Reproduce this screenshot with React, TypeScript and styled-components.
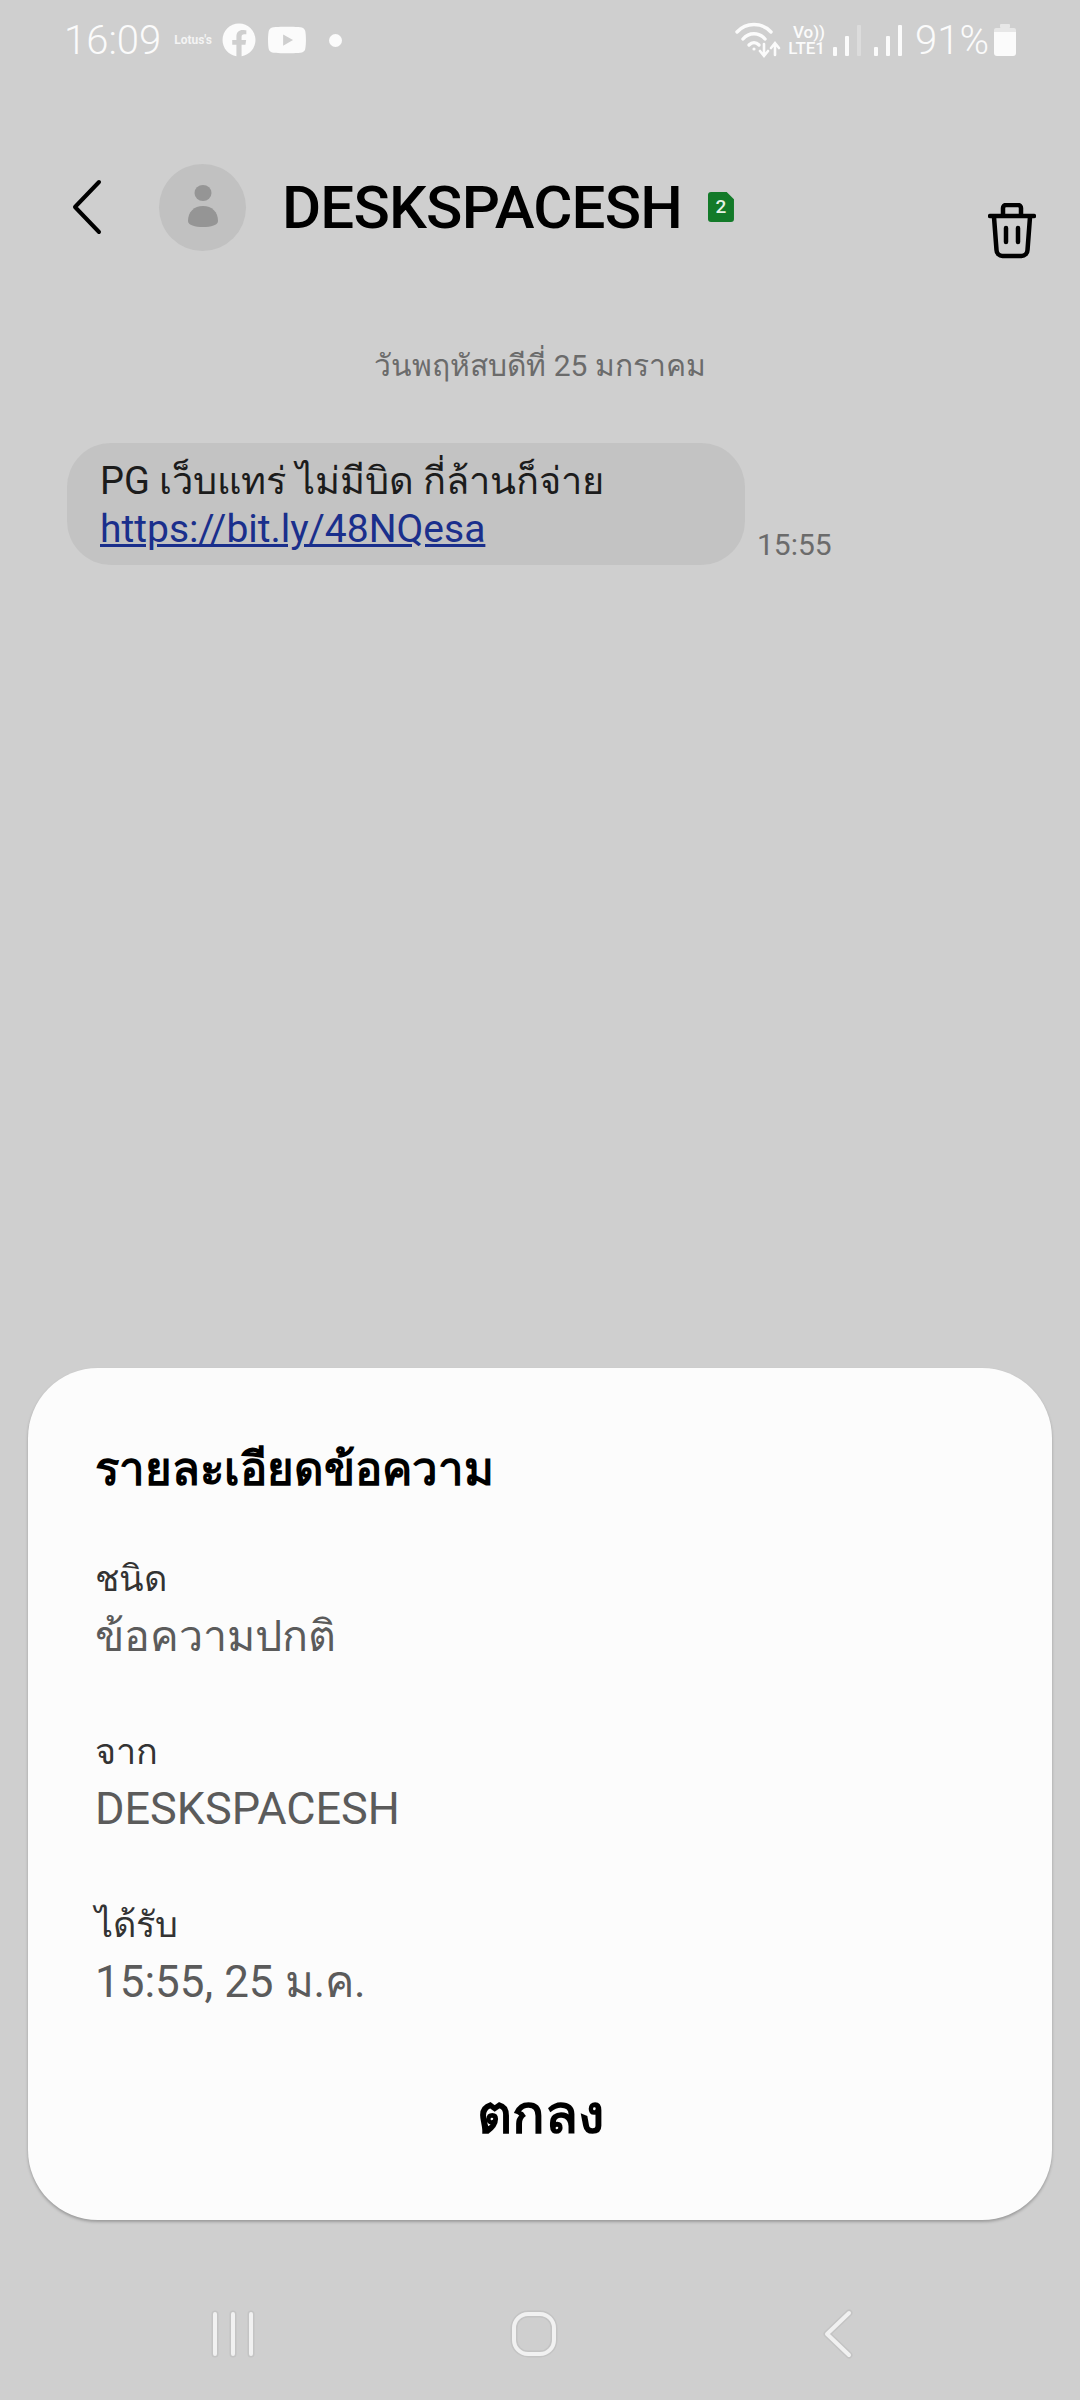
import React from "react";
import styled, { createGlobalStyle } from "styled-components";
import { FaFacebook, FaYoutube } from "react-icons/fa";

const GlobalStyle = createGlobalStyle`
  html, body {
    margin: 0;
    padding: 0;
    background: #cfcfcf;
  }
  * {
    box-sizing: border-box;
  }
`;

const DetailRows = [
  { label: "ชนิด", value: "ข้อความปกติ", size: 43 },
  { label: "จาก", value: "DESKSPACESH", size: 45 },
  { label: "ได้รับ", value: "15:55, 25 ม.ค.", size: 44 },
];

const App: React.FC = () => {
  return (
    <Screen>
      <GlobalStyle />
      <StatusBar>
        <StatusGroup>
          <Clock>16:09</Clock>
          <LotusLabel>Lotus's</LotusLabel>
          <FaFacebook size={34} color="#fbfbfb" />
          <FaYoutube size={40} color="#fbfbfb" />
          <Dot />
        </StatusGroup>
        <StatusGroup>
          <WifiIcon />
          <VoLte>
            <VoLteLine>Vo))</VoLteLine>
            <VoLteLine>LTE1</VoLteLine>
          </VoLte>
          <SignalPair>
            <SignalIcon dim />
            <SignalIcon />
          </SignalPair>
          <BatteryText>91%</BatteryText>
          <BatteryIcon />
        </StatusGroup>
      </StatusBar>

      <Header>
        <BackIcon />
        <Avatar>
          <PersonIcon />
        </Avatar>
        <Title>DESKSPACESH</Title>
        <SimBadge>2</SimBadge>
        <TrashIcon />
      </Header>

      <DateLine>วันพฤหัสบดีที่ 25 มกราคม</DateLine>

      <MessageRow>
        <Bubble>
          <div>PG เว็บแทร่ ไม่มีบิด กี่ล้านก็จ่าย</div>
          <MessageLink href="#">https://bit.ly/48NQesa</MessageLink>
        </Bubble>
        <MessageTime>15:55</MessageTime>
      </MessageRow>

      <Sheet>
        <SheetTitle>รายละเอียดข้อความ</SheetTitle>
        {DetailRows.map((row) => (
          <DetailRow key={row.label}>
            <DetailLabel>{row.label}</DetailLabel>
            <DetailValue $size={row.size}>{row.value}</DetailValue>
          </DetailRow>
        ))}
        <OkButton>ตกลง</OkButton>
      </Sheet>

      <NavBar>
        <RecentsIcon />
        <HomeIcon />
        <NavBackIcon />
      </NavBar>
    </Screen>
  );
};

export default App;

const WifiIcon = () => (
  <svg width="46" height="40" viewBox="0 0 46 40" fill="none" stroke="#fbfbfb" strokeWidth="3.4" strokeLinecap="round">
    <path d="M2 12 C11 2 27 2 36 12" />
    <path d="M8 19 C14 12 24 12 30 19" />
    <path d="M14 25 C17 22 21 22 24 25" />
    <circle cx="19" cy="29" r="1.6" fill="#fbfbfb" stroke="none" />
    <path d="M29 24 V35 M25 31 L29 36 L33 31" strokeWidth="2.6" />
    <path d="M40 35 V24 M36 28 L40 23 L44 28" strokeWidth="2.6" />
  </svg>
);

const SignalIcon = ({ dim }: { dim?: boolean }) => (
  <svg width="28" height="32" viewBox="0 0 28 32" fill="#fbfbfb">
    <rect x="0" y="23" width="4" height="9" rx="1" />
    <rect x="12" y="12" width="4" height="20" rx="1" />
    <rect x="24" y="1" width="4" height="31" rx="1" opacity={dim ? 0.3 : 1} />
  </svg>
);

const BatteryIcon = () => (
  <svg width="22" height="32" viewBox="0 0 22 32" fill="#fbfbfb">
    <rect x="6" y="0" width="10" height="4" rx="1" opacity="0.55" />
    <rect x="0" y="4" width="22" height="6" rx="2" opacity="0.55" />
    <path d="M0 8 H22 V29 a3 3 0 0 1 -3 3 H3 a3 3 0 0 1 -3 -3 Z" />
  </svg>
);

const BackIcon = () => (
  <BackSvg width="32" height="56" viewBox="0 0 32 56" fill="none" stroke="#000" strokeWidth="4" strokeLinecap="round" strokeLinejoin="round">
    <path d="M28 3 L4 28 L28 53" />
  </BackSvg>
);

const PersonIcon = () => (
  <svg width="32" height="44" viewBox="0 0 32 44" fill="#959595">
    <ellipse cx="16" cy="8" rx="8.5" ry="8" />
    <path d="M1 36 C1 27 7 21 16 21 C25 21 31 27 31 36 C31 40 24 42 16 42 C8 42 1 40 1 36 Z" />
  </svg>
);

const TrashIcon = () => (
  <TrashSvg width="48" height="56" viewBox="0 0 48 56" fill="none" stroke="#000" strokeWidth="4.5" strokeLinecap="round" strokeLinejoin="round">
    <path d="M2 13 H46" />
    <path d="M15 12 V5 a3 3 0 0 1 3 -3 H30 a3 3 0 0 1 3 3 V12" />
    <path d="M6 14 L8.5 47 a6 6 0 0 0 6 6 H33.5 a6 6 0 0 0 6 -6 L42 14" />
    <path d="M18 25 V39 M30 25 V39" />
  </TrashSvg>
);

const RecentsIcon = () => (
  <svg width="44" height="48" viewBox="0 0 44 48" fill="none" stroke="#f1f1f1" strokeWidth="4" strokeLinecap="round">
    <g stroke="#c4c4c4" strokeWidth="7">
      <path d="M4 4 V44 M22 4 V44 M40 4 V44" />
    </g>
    <path d="M4 4 V44 M22 4 V44 M40 4 V44" />
  </svg>
);

const HomeIcon = () => (
  <HomeSvg width="48" height="50" viewBox="0 0 48 50" fill="none">
    <rect x="4" y="5" width="40" height="40" rx="14" stroke="#c4c4c4" strokeWidth="7" />
    <rect x="4" y="5" width="40" height="40" rx="14" stroke="#f1f1f1" strokeWidth="4" />
  </HomeSvg>
);

const NavBackIcon = () => (
  <svg width="32" height="50" viewBox="0 0 32 50" fill="none" strokeLinecap="round" strokeLinejoin="round">
    <path d="M27 4 L5 25 L27 46" stroke="#c4c4c4" strokeWidth="7" />
    <path d="M27 4 L5 25 L27 46" stroke="#f1f1f1" strokeWidth="4" />
  </svg>
);

const Screen = styled.div`
  width: 1080px;
  height: 2400px;
  display: flex;
  flex-direction: column;
  background: #cfcfcf;
  font-family: Roboto, "Noto Sans", "DejaVu Sans", sans-serif;
  overflow: hidden;
`;

const StatusBar = styled.div`
  height: 80px;
  padding: 0 64px 0 64px;
  display: flex;
  align-items: center;
  justify-content: space-between;
`;

const StatusGroup = styled.div`
  display: flex;
  align-items: center;
  gap: 11px;
`;

const Clock = styled.span`
  font-size: 40px;
  font-weight: 300;
  color: #fbfbfb;
  margin-right: 2px;
`;

const LotusLabel = styled.span`
  font-size: 12px;
  font-weight: 700;
  color: #f4f4f4;
  margin-right: -1px;
`;

const Dot = styled.span`
  width: 13px;
  height: 13px;
  margin-left: 11px;
  border-radius: 50%;
  background: #fbfbfb;
`;

const VoLte = styled.div`
  display: flex;
  flex-direction: column;
  align-items: flex-end;
  font-size: 17px;
  font-weight: 500;
  color: #fbfbfb;
  margin-left: -4px;
`;

const VoLteLine = styled.span`
  display: block;
  height: 16px;
  line-height: 16px;
`;

const SignalPair = styled.div`
  display: flex;
  align-items: center;
  gap: 13px;
  margin-left: -3px;
`;

const BatteryText = styled.span`
  font-size: 40px;
  font-weight: 300;
  color: #fbfbfb;
  margin-left: 2px;
  margin-right: -6px;
`;

const Header = styled.div`
  height: 128px;
  margin-top: 63px;
  padding: 0 44px 0 71px;
  display: flex;
  align-items: center;
`;

const BackSvg = styled.svg`
  flex-shrink: 0;
`;

const Avatar = styled.div`
  width: 87px;
  height: 87px;
  margin-left: 56px;
  border-radius: 50%;
  background: #c1c1c1;
  display: flex;
  align-items: center;
  justify-content: center;
`;

const Title = styled.div`
  margin-left: 36px;
  font-size: 60px;
  font-weight: 500;
  letter-spacing: -0.8px;
  color: #000;
`;

const SimBadge = styled.div`
  width: 26px;
  height: 30px;
  margin-left: 26px;
  border-radius: 3px;
  clip-path: polygon(0 0, 72% 0, 100% 24%, 100% 100%, 0 100%);
  background: #137a29;
  color: #e6f2e6;
  font-size: 19px;
  font-weight: 500;
  line-height: 30px;
  text-align: center;
`;

const TrashSvg = styled.svg`
  margin-left: auto;
  margin-top: 48px;
`;

const DateLine = styled.div`
  margin-top: 75px;
  text-align: center;
  font-size: 30px;
  line-height: 40px;
  color: #6b6b6b;
`;

const MessageRow = styled.div`
  margin-top: 57px;
  padding-left: 67px;
  display: flex;
  align-items: flex-end;
  gap: 12px;
`;

const Bubble = styled.div`
  width: 678px;
  height: 122px;
  padding: 15px 33px;
  border-radius: 44px;
  background: #c3c3c3;
  font-size: 38px;
  line-height: 47px;
  color: #1c1c1c;
`;

const MessageLink = styled.a`
  display: block;
  margin-top: 1px;
  font-size: 39px;
  color: #1a2f8c;
  text-decoration: underline;
`;

const MessageTime = styled.span`
  font-size: 30px;
  line-height: 40px;
  color: #6b6b6b;
`;

const Sheet = styled.div`
  margin: auto 28px 0;
  height: 852px;
  padding: 72px 67px 0;
  border-radius: 70px;
  background: #fcfcfc;
  box-shadow: 0 2px 3px rgba(0, 0, 0, 0.25);
  display: flex;
  flex-direction: column;
`;

const SheetTitle = styled.div`
  font-size: 45.5px;
  line-height: 60px;
  font-weight: 700;
  color: #000;
  margin-bottom: 53px;
`;

const DetailRow = styled.div`
  display: flex;
  flex-direction: column;
  margin-bottom: 59px;
`;

const DetailLabel = styled.div`
  font-size: 36px;
  line-height: 52px;
  color: #333;
`;

const DetailValue = styled.div<{ $size: number }>`
  font-size: ${(props) => props.$size}px;
  line-height: 62px;
  color: #5b5b5b;
`;

const OkButton = styled.div`
  text-align: center;
  font-size: 54px;
  line-height: 60px;
  font-weight: 700;
  color: #000;
  margin-top: 13px;
`;

const NavBar = styled.div`
  height: 180px;
  padding: 48px 226px 0 211px;
  display: flex;
  align-items: center;
  justify-content: space-between;
`;

const HomeSvg = styled.svg`
  margin-right: 9px;
`;
